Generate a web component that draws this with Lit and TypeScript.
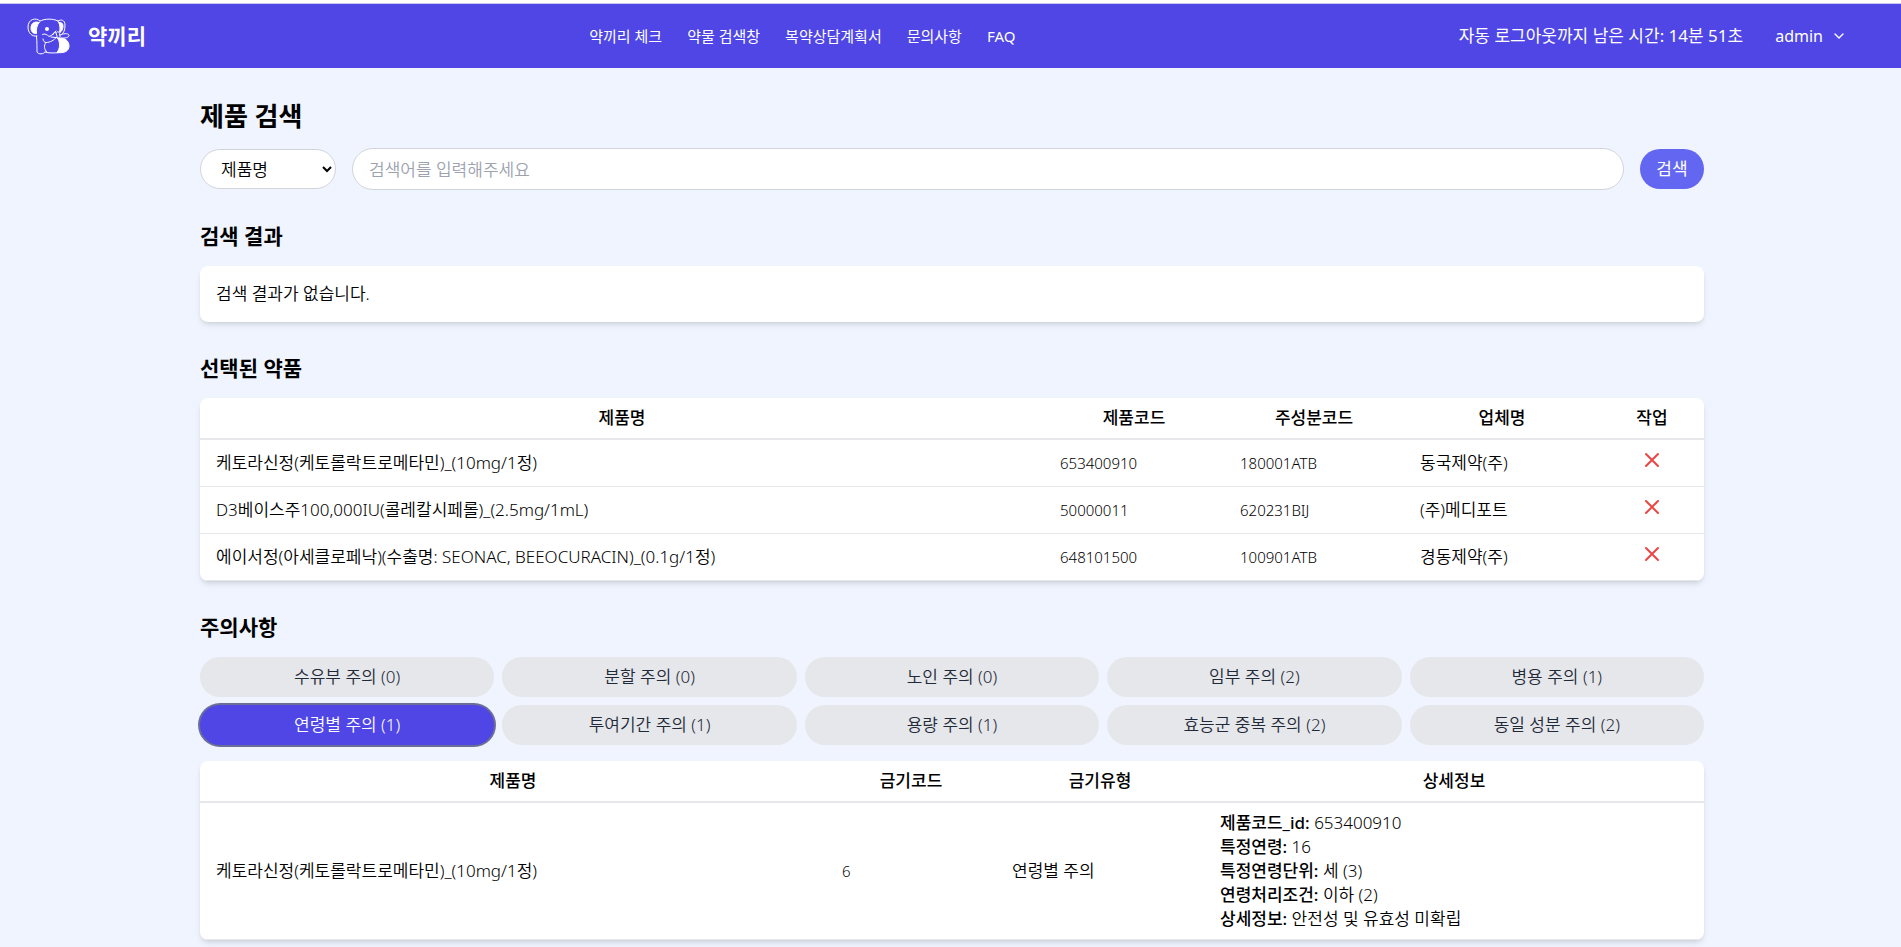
import { LitElement, html, css } from "lit";
import { customElement, state } from "lit/decorators.js";
import { classMap } from "lit/directives/class-map.js";

interface Drug {
  name: string;
  code: string;
  ingredient: string;
  company: string;
}

const NAV = ["약끼리 체크", "약물 검색창", "복약상담계획서", "문의사항", "FAQ"];

const DRUGS: Drug[] = [
  { name: "케토라신정(케토롤락트로메타민)_(10mg/1정)", code: "653400910", ingredient: "180001ATB", company: "동국제약(주)" },
  { name: "D3베이스주100,000IU(콜레칼시페롤)_(2.5mg/1mL)", code: "50000011", ingredient: "620231BIJ", company: "(주)메디포트" },
  { name: "에이서정(아세클로페낙)(수출명: SEONAC, BEEOCURACIN)_(0.1g/1정)", code: "648101500", ingredient: "100901ATB", company: "경동제약(주)" },
];

const CAUTIONS: [string, number][] = [
  ["수유부 주의", 0],
  ["분할 주의", 0],
  ["노인 주의", 0],
  ["임부 주의", 2],
  ["병용 주의", 1],
  ["연령별 주의", 1],
  ["투여기간 주의", 1],
  ["용량 주의", 1],
  ["효능군 중복 주의", 2],
  ["동일 성분 주의", 2],
];

const DETAILS: [string, string][] = [
  ["제품코드_id", "653400910"],
  ["특정연령", "16"],
  ["특정연령단위", "세 (3)"],
  ["연령처리조건", "이하 (2)"],
  ["상세정보", "안전성 및 유효성 미확립"],
];

@customElement("app-header")
export class AppHeader extends LitElement {
  static styles = css`
    :host {
      display: block;
      border-top: 3px solid #fff;
      background: #4f46e5;
      color: #fff;
      font-weight: 400;
    }
    .bar {
      display: flex;
      align-items: center;
      justify-content: space-between;
      height: 64px;
      padding: 0 24px;
      border-top: 1px solid #c9c9ee;
    }
    .brand,
    .nav,
    .side {
      display: flex;
      align-items: center;
    }
    a {
      color: inherit;
      text-decoration: none;
    }
    .brand {
      gap: 16px;
      font-size: 21px;
      font-weight: 700;
    }
    .logo {
      display: block;
      width: 48px;
      height: 48px;
    }
    .nav {
      gap: 25px;
      font-size: 15px;
    }
    .side {
      font-size: 17px;
    }
    .user {
      display: flex;
      align-items: center;
      gap: 10px;
      padding: 8px 32px;
      border: 0;
      background: none;
      color: inherit;
      font: inherit;
      font-size: 16px;
      cursor: pointer;
    }
    .chevron {
      width: 12px;
      height: 12px;
    }
  `;

  render() {
    return html`
      <header class="bar">
        <a class="brand" href="#">
          <svg class="logo" viewBox="0 0 48 48" fill="none" stroke="#fff" stroke-linejoin="round" stroke-linecap="round" aria-hidden="true">
            <path d="M16 9C12 5 4 7 4 15c0 6 4 10 9 9M34 9c3-2 7-1 7 4 0 5-1 8-4 10" />
            <path d="M15 10.500C11 9 7 11 7 16c0 4 2.500 6 5.500 5.500C12 17 13 13.500 15 10.500z" fill="#fff" />
            <path d="M35 10.500c2.500-.5 4 1 4 3.500 0 3-1 5-3 6.500.5-4 .3-7-1-10z" fill="#fff" />
            <path d="M16 9c5-2.500 13-2.500 18 0 2.500 4 2.500 8 1.500 11M12.500 24c.5 6 .5 11 .5 16 1 2.500 7 2.500 8 0M21 40c4 1.500 8 .8 13 .8" />
            <path d="M18.500 22.500c2-1.500 5 .5 6.500 2 3-1 5.500-3.500 7-5.500M19 27c0 2 1.500 3.500 3 3.500 4 0 8-2 11-6M22 30.500c-2.500 3-2 7 1 9.500" />
            <path d="M29 22.500c0-2 2-3 3-1.500l1 3M32 21c1-2 3-1.500 3.500.5l.5 3M27 25l9 1M36 23c3-1.500 8-2 9 0 .5 2.500-4 3.500-8 3" />
            <path d="M34 26.500c7-1.500 11 2.500 11 7.500 0 5-4.500 7.500-12 6.500 3-4 3.500-9 1-14z" fill="#fff" />
            <circle cx="23" cy="17" r="2" fill="#fff" stroke="none" />
          </svg>
          <span>약끼리</span>
        </a>
        <nav class="nav">${NAV.map((item) => html`<a href="#">${item}</a>`)}</nav>
        <div class="side">
          <span>자동 로그아웃까지 남은 시간: 14분 51초</span>
          <button class="user" type="button">
            admin
            <svg class="chevron" viewBox="0 0 12 12" fill="none" stroke="currentColor" stroke-width="1.4" stroke-linecap="round" stroke-linejoin="round" aria-hidden="true">
              <path d="M2 4l4 4 4-4" />
            </svg>
          </button>
        </div>
      </header>
    `;
  }
}

@customElement("app-root")
export class AppRoot extends LitElement {
  @state() private active = 5;
  @state() private drugs = DRUGS;

  static styles = css`
    :host {
      display: block;
      min-height: 100vh;
      background: #eff4ff;
      color: #000;
      font-family: "Noto Sans", "Noto Sans CJK KR", sans-serif;
      font-size: 17px;
      font-weight: 350;
      line-height: 24px;
    }
    *,
    *::before {
      box-sizing: border-box;
    }
    .page {
      display: flex;
      flex-direction: column;
      gap: 32px;
      max-width: 1539px;
      margin: 0 auto;
      padding: 32px 16px 0 19px;
    }
    .section {
      display: flex;
      flex-direction: column;
      gap: 16px;
    }
    h1,
    h2 {
      margin: 0;
      font-weight: 700;
    }
    h1 {
      font-size: 26px;
      line-height: 32px;
    }
    h2 {
      font-size: 21px;
      line-height: 28px;
    }
    .search {
      display: flex;
      align-items: center;
      gap: 16px;
    }
    .field,
    .query,
    .submit {
      height: 40px;
      border-radius: 20px;
      font: inherit;
    }
    .field {
      width: 136px;
      padding: 0 0 0 16px;
      border: 1px solid #d1d5db;
      background: #fff;
      color: #000;
    }
    .query {
      flex: 1;
      min-width: 0;
      height: 42px;
      padding: 0 16px;
      border: 1px solid #d1d5db;
      border-radius: 21px;
      background: #fff;
    }
    .query::placeholder {
      color: #9ca3af;
    }
    .submit {
      width: 64px;
      padding: 0;
      border: 0;
      background: #6366f1;
      color: #fff;
      font-weight: 400;
      cursor: pointer;
    }
    .card {
      border-radius: 8px;
      background: #fff;
      box-shadow: 0 4px 6px -1px rgb(0 0 0 / 10%), 0 2px 4px -2px rgb(0 0 0 / 10%);
      overflow: hidden;
    }
    .empty {
      margin: 0;
      padding: 16px;
    }
    table {
      width: 100%;
      border-collapse: separate;
      border-spacing: 0;
      table-layout: fixed;
    }
    th,
    td {
      padding: 8px 16px;
      border-bottom: 1px solid #e5e7eb;
    }
    th {
      border-bottom-width: 2px;
      font-weight: 500;
    }
    td {
      height: 47px;
      text-align: left;
    }
    strong {
      font-weight: 500;
    }
    .latin {
      font-size: 15px;
    }
    .col-code,
    .col-ingredient {
      width: 180px;
    }
    .col-company {
      width: 196px;
    }
    .col-action {
      width: 104px;
    }
    .col-ban {
      width: 170px;
    }
    .col-type {
      width: 208px;
    }
    .col-detail {
      width: 500px;
    }
    .action {
      padding: 8px 16px 14px;
      text-align: center;
    }
    .remove {
      display: block;
      margin: 0 auto;
      padding: 0;
      border: 0;
      background: none;
      color: #ef4444;
      cursor: pointer;
    }
    .cross {
      display: block;
      width: 24px;
      height: 24px;
    }
    .cautions {
      display: grid;
      grid-template-columns: repeat(5, 1fr);
      gap: 8px;
    }
    .pill {
      height: 40px;
      padding: 0 16px;
      border: 0;
      border-radius: 20px;
      background: #e5e7eb;
      color: #1f2937;
      font: inherit;
      cursor: pointer;
    }
    .pill.active {
      background: #4f46e5;
      color: #fff;
      box-shadow: 0 0 0 2px #6b6f98;
    }
    .details {
      margin: 0;
      padding: 0;
      list-style: none;
    }
  `;

  private remove(drug: Drug) {
    this.drugs = this.drugs.filter((d) => d !== drug);
  }

  private renderDrug(drug: Drug) {
    return html`
      <tr>
        <td>${drug.name}</td>
        <td class="latin">${drug.code}</td>
        <td class="latin">${drug.ingredient}</td>
        <td>${drug.company}</td>
        <td class="action">
          <button class="remove" type="button" aria-label="삭제" @click=${() => this.remove(drug)}>
            <svg class="cross" viewBox="0 0 24 24" fill="none" stroke="currentColor" stroke-width="2" stroke-linecap="round" stroke-linejoin="round">
              <path d="M6 18L18 6M6 6l12 12" />
            </svg>
          </button>
        </td>
      </tr>
    `;
  }

  render() {
    return html`
      <app-header></app-header>
      <main class="page">
        <section class="section">
          <h1>제품 검색</h1>
          <form class="search" @submit=${(e: Event) => e.preventDefault()}>
            <select class="field" aria-label="검색 기준">
              <option>제품명</option>
              <option>제품코드</option>
              <option>업체명</option>
            </select>
            <input class="query" type="text" aria-label="검색어" placeholder="검색어를 입력해주세요" />
            <button class="submit" type="submit">검색</button>
          </form>
        </section>

        <section class="section">
          <h2>검색 결과</h2>
          <div class="card"><p class="empty">검색 결과가 없습니다.</p></div>
        </section>

        <section class="section">
          <h2>선택된 약품</h2>
          <div class="card">
            <table>
              <thead>
                <tr>
                  <th>제품명</th>
                  <th class="col-code">제품코드</th>
                  <th class="col-ingredient">주성분코드</th>
                  <th class="col-company">업체명</th>
                  <th class="col-action">작업</th>
                </tr>
              </thead>
              <tbody>
                ${this.drugs.map((drug) => this.renderDrug(drug))}
              </tbody>
            </table>
          </div>
        </section>

        <section class="section">
          <h2>주의사항</h2>
          <div class="cautions">
            ${CAUTIONS.map(
              ([label, count], i) => html`
                <button
                  type="button"
                  class=${classMap({ pill: true, active: i === this.active })}
                  @click=${() => (this.active = i)}
                >${label} (${count})</button>
              `,
            )}
          </div>
          <div class="card">
            <table>
              <thead>
                <tr>
                  <th>제품명</th>
                  <th class="col-ban">금기코드</th>
                  <th class="col-type">금기유형</th>
                  <th class="col-detail">상세정보</th>
                </tr>
              </thead>
              <tbody>
                <tr>
                  <td>${DRUGS[0].name}</td>
                  <td class="latin">6</td>
                  <td>연령별 주의</td>
                  <td>
                    <ul class="details">
                      ${DETAILS.map(([key, value]) => html`<li><strong>${key}:</strong> ${value}</li>`)}
                    </ul>
                  </td>
                </tr>
              </tbody>
            </table>
          </div>
        </section>
      </main>
    `;
  }
}
